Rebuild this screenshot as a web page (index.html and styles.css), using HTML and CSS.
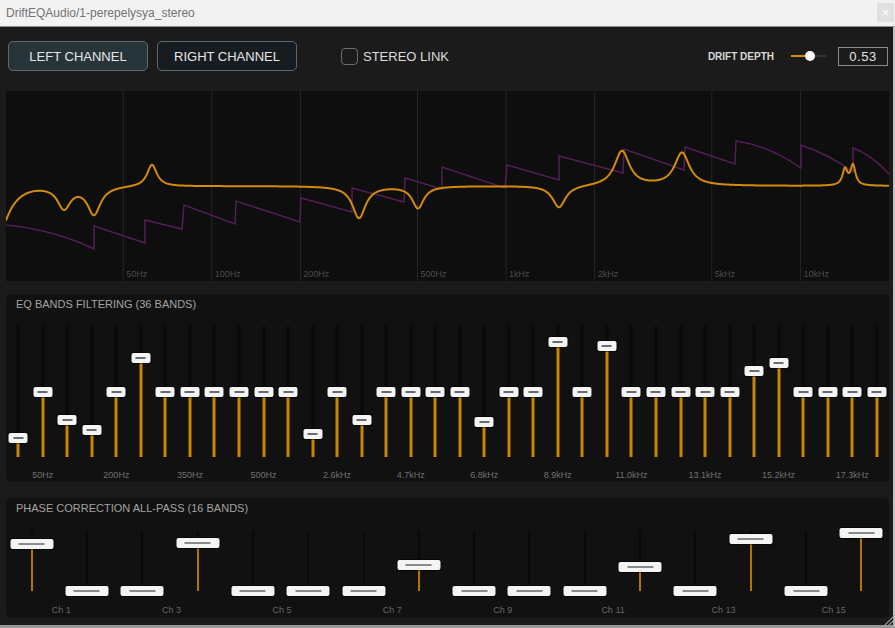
FILE: index.html
```html
<!DOCTYPE html>
<html lang="en">
  <head>
    <meta charset="UTF-8">
    <meta name="viewport" content="width=device-width, initial-scale=1.0">
    <link rel="stylesheet" href="styles.css">
    <title>DriftEQAudio</title>
  </head>
  <body>
    <div class="titlebar">
      <span class="title">DriftEQAudio/1-perepelysya_stereo</span>
      <button class="close-button">&times;</button>
    </div>

    <div class="main">
      <div class="toolbar">
        <button class="channel-button active">LEFT CHANNEL</button>
        <button class="channel-button">RIGHT CHANNEL</button>
        <label class="stereo-link"><span class="checkbox"></span>STEREO LINK</label>
        <div class="drift">
          <span class="drift-label">DRIFT DEPTH</span>
          <div class="drift-slider">
            <div class="drift-fill"></div>
            <div class="drift-thumb"></div>
          </div>
          <div class="drift-value">0.53</div>
        </div>
      </div>

      <div class="graph">
        <svg id="graph" viewBox="6 91 883 190" width="883" height="190">
          <g id="grid" class="grid"></g>
          <path class="phase-curve" d="M6 225 Q55 230 94 249 L94 226 L145 243 L145 220 L182 229 L184 205 L235 224 L236 201 L300 222 L301 198 L352 212 L352 188 L404 202 L405 178 L442 189 L442 167 L505 188 L507 165 L559 180 L559 156 L623 173 L624 149 L684 170 L685 147 L735 164 L736 141 Q770 146 801 168 L801 145 Q830 155 853 172 L853 148 Q872 155 889 174"/>
          <path id="eq-curve" class="eq-curve"/>
        </svg>
      </div>

      <div class="panel eq-panel">
        <h2>EQ BANDS FILTERING (36 BANDS)</h2>
        <div class="bands" id="eq-bands"></div>
        <div class="band-labels" id="eq-labels"></div>
      </div>

      <div class="panel phase-panel">
        <h2>PHASE CORRECTION ALL-PASS (16 BANDS)</h2>
        <div class="bands" id="phase-bands"></div>
        <div class="band-labels" id="phase-labels"></div>
      </div>

      <svg class="grip" width="15" height="15" viewBox="0 0 15 15">
        <path d="M15 2 L2 15 M15 6 L6 15 M15 10 L10 15"/>
      </svg>
    </div>
    <script src="script.js"></script>
  </body>
</html>
```

FILE: styles.css
```css
* {
  box-sizing: border-box;
}

html,
body {
  margin: 0;
  width: 895px;
  height: 628px;
  overflow: hidden;
}

body {
  font-family: "Liberation Sans", Arial, sans-serif;
  background-color: #1b1b1b;
  display: flex;
  flex-direction: column;
}

.titlebar {
  height: 27px;
  background-color: #f2f2f2;
  border-bottom: 1px solid #8c8c8c;
  display: flex;
  align-items: center;
  justify-content: space-between;
  padding: 0 1px 1px 6px;
}

.title {
  font-size: 12px;
  color: #737373;
}

.close-button {
  width: 17px;
  height: 19px;
  padding: 0;
  border: none;
  background-color: #e0e0e0;
  color: #ffffff;
  font-size: 13px;
  line-height: 19px;
}

.main {
  flex: 1;
  position: relative;
  border-right: 2px solid #c4c4c4;
  border-bottom: 3px solid #9a9a9a;
  padding: 14px 4px 0 6px;
}

/* toolbar */
.toolbar {
  display: flex;
  align-items: center;
  height: 30px;
  padding-left: 2px;
}

.channel-button {
  width: 140px;
  height: 30px;
  padding: 0;
  border: 1px solid #5b6a70;
  border-radius: 5px;
  background-color: #161c1f;
  color: #e6e6e6;
  font-family: "Liberation Sans", Arial, sans-serif;
  font-size: 13px;
}

.channel-button.active {
  background-color: #27343a;
}

.channel-button + .channel-button {
  margin-left: 9px;
}

.stereo-link {
  margin-left: 44px;
  display: flex;
  align-items: center;
  gap: 5px;
  font-size: 13px;
  color: #dcdcdc;
}

.checkbox {
  width: 17px;
  height: 17px;
  border: 1.5px solid #6c6c6c;
  border-radius: 4px;
}

.drift {
  margin-left: auto;
  display: flex;
  align-items: center;
  padding-right: 1px;
}

.drift-label {
  font-size: 10px;
  font-weight: bold;
  color: #d8d8d8;
}

.drift-slider {
  position: relative;
  width: 35px;
  height: 2px;
  margin-left: 17px;
  background-color: #333333;
}

.drift-fill {
  position: absolute;
  left: 0;
  top: 0;
  bottom: 0;
  width: 53%;
  background-color: #d38c0a;
}

.drift-thumb {
  position: absolute;
  left: 53%;
  top: 50%;
  width: 10px;
  height: 10px;
  border-radius: 50%;
  background-color: #ffffff;
  transform: translate(-50%, -50%);
}

.drift-value {
  margin-left: 12px;
  width: 50px;
  height: 19px;
  border: 1px solid #8a8a8a;
  color: #e4e4e4;
  font-size: 13px;
  line-height: 17px;
  text-align: center;
  letter-spacing: 0.5px;
}

/* response graph */
.graph {
  margin-top: 20px;
  height: 190px;
  background-color: #0e0e0e;
}

.graph svg {
  display: block;
}

.grid line {
  stroke: #262626;
  stroke-width: 1;
}

.grid text {
  font-family: "Liberation Sans", Arial, sans-serif;
  font-size: 9px;
  fill: #4d4d4d;
}

.phase-curve {
  fill: none;
  stroke: #531e55;
  stroke-width: 1.5;
}

.eq-curve {
  fill: none;
  stroke: #d38c0a;
  stroke-width: 2;
}

/* fader panels */
.panel {
  background-color: #111111;
  border-radius: 5px;
  padding-top: 3px;
}

.panel h2 {
  margin: 0;
  padding-left: 10px;
  font-size: 11px;
  font-weight: normal;
  line-height: 14px;
  color: #a3a3a3;
}

.eq-panel {
  margin-top: 13px;
  height: 188px;
}

.phase-panel {
  margin-top: 16px;
  height: 120px;
}

.bands {
  display: grid;
}

.eq-panel .bands {
  grid-template-columns: repeat(36, 1fr);
  height: 131px;
  margin-top: 15px;
}

.phase-panel .bands {
  grid-template-columns: repeat(16, 1fr);
  height: 60px;
  margin-top: 16px;
  margin-left: -2px;
}

.band {
  position: relative;
}

.track {
  position: absolute;
  top: 0;
  bottom: 0;
  left: 50%;
  width: 3px;
  transform: translateX(-50%);
  background-color: #090909;
}

.phase-panel .track {
  width: 2px;
}

.fill {
  position: absolute;
  left: 0;
  right: 0;
  bottom: 0;
  background-color: #c98500;
}

.phase-panel .fill {
  background-color: #b37500;
}

.knob {
  position: absolute;
  left: 50%;
  width: 19px;
  height: 10px;
  transform: translate(-50%, -50%);
  background-color: #f4f4f4;
  border-radius: 2px;
  box-shadow: 0 0 0 1px rgba(0, 0, 0, 0.5);
}

.knob::after {
  content: "";
  position: absolute;
  left: 50%;
  top: 50%;
  width: 10px;
  height: 2px;
  transform: translate(-50%, -50%);
  background-color: #6b6b6b;
}

.phase-panel .knob {
  width: 43px;
}

.phase-panel .knob::after {
  width: 26px;
  background-color: #8a8a8a;
}

.band-labels {
  display: grid;
  font-size: 9px;
  line-height: 11px;
  color: #707070;
  text-align: center;
}

.eq-panel .band-labels {
  grid-template-columns: repeat(12, 1fr);
  margin-top: 13px;
}

.phase-panel .band-labels {
  grid-template-columns: repeat(8, 1fr);
  margin-top: 14px;
  color: #666666;
}

.grip {
  position: absolute;
  right: -2px;
  bottom: -3px;
}

.grip path {
  stroke: #9c9c9c;
  stroke-width: 1.2;
}
```

FILE: script.js
```js
const svgNS = "http://www.w3.org/2000/svg";

// graph spans 20Hz - 20kHz on a log scale
const plot = { left: 6, top: 91, width: 883, height: 190 };

function freqToX(freq) {
  return plot.left + plot.width * Math.log10(freq / 20) / 3;
}

const gridFreqs = [
  [50, "50Hz"], [100, "100Hz"], [200, "200Hz"], [500, "500Hz"],
  [1000, "1kHz"], [2000, "2kHz"], [5000, "5kHz"], [10000, "10kHz"]
];

const grid = document.getElementById("grid");
gridFreqs.forEach(([freq, name]) => {
  const x = freqToX(freq);
  const line = document.createElementNS(svgNS, "line");
  line.setAttribute("x1", x);
  line.setAttribute("x2", x);
  line.setAttribute("y1", plot.top);
  line.setAttribute("y2", plot.top + plot.height);
  grid.appendChild(line);

  const label = document.createElementNS(svgNS, "text");
  label.setAttribute("x", x + 3);
  label.setAttribute("y", 277);
  label.textContent = name;
  grid.appendChild(label);
});

// resonances of the combined response, in screen pixels
const peaks = [
  { x: 64, gain: 22, width: 8 },
  { x: 94, gain: 28, width: 8 },
  { x: 152, gain: -22, width: 6 },
  { x: 359, gain: 32, width: 8 },
  { x: 418, gain: 22, width: 7 },
  { x: 559, gain: 22, width: 8 },
  { x: 622, gain: -35, width: 9 },
  { x: 682, gain: -33, width: 9 },
  { x: 845, gain: -16, width: 3 },
  { x: 853, gain: -20, width: 3 }
];

function responseAt(x) {
  let y = 186 + 34 * Math.exp(-(x - 6) / 12);
  peaks.forEach(p => {
    const d = (x - p.x) / p.width;
    y += p.gain / (1 + d * d);
  });
  return y;
}

let curve = "";
for (let x = plot.left; x <= plot.left + plot.width; x += 0.5) {
  curve += (x === plot.left ? "M" : "L") + x + " " + responseAt(x).toFixed(2) + " ";
}
document.getElementById("eq-curve").setAttribute("d", curve);

// faders
const eqGains = [
  -8.5, 0, -5.2, -7.1, 0, 6.1, 0, 0, 0, 0, 0, 0,
  -7.8, 0, -5.2, 0, 0, 0, 0, -5.6, 0, 0, 9.0, 0,
  8.3, 0, 0, 0, 0, 0, 3.8, 5.2, 0, 0, 0, 0
];
const eqLabels = [
  "50Hz", "200Hz", "350Hz", "500Hz", "2.6kHz", "4.7kHz",
  "6.8kHz", "8.9kHz", "11.0kHz", "13.1kHz", "15.2kHz", "17.3kHz"
];
const phaseAmounts = [0.78, 0, 0, 0.8, 0, 0, 0, 0.44, 0, 0, 0, 0.4, 0, 0.86, 0, 0.96];
const phaseLabels = ["Ch 1", "Ch 3", "Ch 5", "Ch 7", "Ch 9", "Ch 11", "Ch 13", "Ch 15"];

function buildBands(id, levels) {
  const container = document.getElementById(id);
  levels.forEach(level => {
    const band = document.createElement("div");
    band.className = "band";
    band.innerHTML =
      `<div class="track"><div class="fill" style="height:${level * 100}%"></div></div>` +
      `<div class="knob" style="top:${(1 - level) * 100}%"></div>`;
    container.appendChild(band);
  });
}

function buildLabels(id, names) {
  const container = document.getElementById(id);
  names.forEach(name => {
    const label = document.createElement("span");
    label.textContent = name;
    container.appendChild(label);
  });
}

buildBands("eq-bands", eqGains.map(g => (g + 12) / 24));
buildLabels("eq-labels", eqLabels);
buildBands("phase-bands", phaseAmounts);
buildLabels("phase-labels", phaseLabels);
```
